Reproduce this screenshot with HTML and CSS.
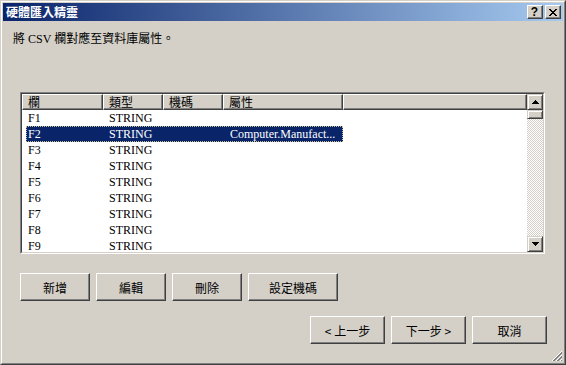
FILE: index.html
```html
<!DOCTYPE html>
<html lang="zh-Hant">
<head>
  <meta charset="UTF-8">
  <title>硬體匯入精靈</title>
  <link rel="stylesheet" href="styles.css">
</head>
<body>
  <div class="window">
    <div class="frame">
      <div class="titlebar">
        <span class="title">硬體匯入精靈</span>
        <div class="caption-buttons">
          <div class="cap-btn help">?</div>
          <div class="cap-btn">
            <svg width="8" height="7" viewBox="0 0 8 7"><path d="M0 0h2v1h-2zM6 0h2v1h-2zM1 1h2v1h-2zM5 1h2v1h-2zM2 2h4v1h-4zM3 3h2v1h-2zM2 4h4v1h-4zM1 5h2v1h-2zM5 5h2v1h-2zM0 6h2v1h-2zM6 6h2v1h-2z" fill="#000"/></svg>
          </div>
        </div>
      </div>

      <div class="content">
        <p class="intro">將 CSV 欄對應至資料庫屬性。</p>

        <!-- 欄位對應清單 -->
        <div class="listview">
          <div class="list-main">
            <div class="header">
              <div class="hcell c1">欄</div>
              <div class="hcell c2">類型</div>
              <div class="hcell c3">機碼</div>
              <div class="hcell c4">屬性</div>
              <div class="hcell filler"></div>
            </div>
            <div class="rows">
              <div class="row"><span class="c1">F1</span><span class="c2">STRING</span><span class="c3"></span><span class="c4"></span></div>
              <div class="row selected"><span class="c1">F2</span><span class="c2">STRING</span><span class="c3"></span><span class="c4">Computer.Manufact...</span></div>
              <div class="row"><span class="c1">F3</span><span class="c2">STRING</span><span class="c3"></span><span class="c4"></span></div>
              <div class="row"><span class="c1">F4</span><span class="c2">STRING</span><span class="c3"></span><span class="c4"></span></div>
              <div class="row"><span class="c1">F5</span><span class="c2">STRING</span><span class="c3"></span><span class="c4"></span></div>
              <div class="row"><span class="c1">F6</span><span class="c2">STRING</span><span class="c3"></span><span class="c4"></span></div>
              <div class="row"><span class="c1">F7</span><span class="c2">STRING</span><span class="c3"></span><span class="c4"></span></div>
              <div class="row"><span class="c1">F8</span><span class="c2">STRING</span><span class="c3"></span><span class="c4"></span></div>
              <div class="row"><span class="c1">F9</span><span class="c2">STRING</span><span class="c3"></span><span class="c4"></span></div>
            </div>
          </div>
          <div class="scrollbar">
            <div class="sb-btn">
              <svg width="7" height="4" viewBox="0 0 7 4"><path d="M3 0h1v1h1v1h1v1h1v1h-7v-1h1v-1h1v-1h1z" fill="#000"/></svg>
            </div>
            <div class="sb-thumb"></div>
            <div class="sb-track"></div>
            <div class="sb-btn">
              <svg width="7" height="4" viewBox="0 0 7 4"><path d="M0 0h7v1h-1v1h-1v1h-1v1h-1v-1h-1v-1h-1v-1h-1z" fill="#000"/></svg>
            </div>
          </div>
        </div>

        <div class="action-row">
          <button class="btn">新增</button>
          <button class="btn">編輯</button>
          <button class="btn">刪除</button>
          <button class="btn wide">設定機碼</button>
        </div>

        <div class="nav-row">
          <button class="btn nav">&lt; 上一步</button>
          <button class="btn nav">下一步 &gt;</button>
          <button class="btn nav">取消</button>
        </div>
      </div>

      <!-- 크기 조절 손잡이 -->
      <svg class="grip" width="12" height="12" viewBox="0 0 12 12">
        <path d="M11 1L1 11M11 5L5 11M11 9L9 11" stroke="#fff" stroke-width="1"/>
        <path d="M11 2L2 11M11 3L3 11M11 6L6 11M11 7L7 11M11 10L10 11" stroke="#808080" stroke-width="1"/>
      </svg>
    </div>
  </div>
</body>
</html>
```

FILE: styles.css
```css
body {
  margin: 0;
  background: #d4d0c8;
  font-family: "Liberation Serif", "Noto Sans CJK TC", serif;
  font-size: 12px;
  color: #000;
}

.window {
  box-sizing: border-box;
  width: 566px;
  height: 365px;
  border: 1px solid;
  border-color: #d4d0c8 #404040 #404040 #d4d0c8;
}

.frame {
  position: relative;
  box-sizing: border-box;
  height: 100%;
  border: 1px solid;
  border-color: #fff #808080 #808080 #fff;
  padding: 1px;
}

.titlebar {
  height: 18px;
  display: flex;
  align-items: center;
  justify-content: space-between;
  background: linear-gradient(to right, #0a246a, #a6caf0);
}

.title {
  padding-left: 3px;
  color: #fff;
  font-family: "Noto Sans CJK TC", sans-serif;
  font-weight: bold;
  font-size: 12px;
  line-height: 18px;
}

.caption-buttons {
  display: flex;
  gap: 2px;
  padding-right: 2px;
}

.cap-btn {
  box-sizing: border-box;
  width: 16px;
  height: 14px;
  background: #d4d0c8;
  border: 1px solid;
  border-color: #fff #404040 #404040 #fff;
  box-shadow: inset -1px -1px #808080;
  display: flex;
  justify-content: center;
  align-items: center;
}

.help {
  font-family: "Liberation Sans", sans-serif;
  font-weight: bold;
  font-size: 12px;
  line-height: 12px;
  padding-right: 1px;
}

.content {
  display: flex;
  flex-direction: column;
}

.intro {
  margin: 10px 0 0 10px;
  line-height: 16px;
  height: 16px;
}

.listview {
  box-sizing: border-box;
  margin: 45px 0 0 17px;
  width: 525px;
  height: 162px;
  border: 1px solid;
  border-color: #808080 #fff #fff #808080;
  display: flex;
}

.list-main {
  flex: 1;
  overflow: hidden;
  background: #fff;
  border: 1px solid;
  border-right: 0;
  border-color: #404040 #d4d0c8 #d4d0c8 #404040;
}

.scrollbar {
  width: 16px;
  display: flex;
  flex-direction: column;
  border: 1px solid;
  border-left: 0;
  border-color: #404040 #d4d0c8 #d4d0c8 #404040;
}

.sb-btn,
.sb-thumb {
  box-sizing: border-box;
  background: #d4d0c8;
  border: 1px solid;
  border-color: #d4d0c8 #404040 #404040 #d4d0c8;
  box-shadow: inset 1px 1px #fff, inset -1px -1px #808080;
}

.sb-btn {
  height: 16px;
  display: flex;
  justify-content: center;
  align-items: center;
}

.sb-thumb {
  height: 9px;
}

.sb-track {
  flex: 1;
  background: conic-gradient(#fff 25%, #d4d0c8 0 50%, #fff 0 75%, #d4d0c8 0);
  background-size: 2px 2px;
}

.header {
  display: flex;
  height: 16px;
}

.hcell {
  box-sizing: border-box;
  height: 16px;
  background: #d4d0c8;
  border: 1px solid;
  border-color: #fff #404040 #404040 #fff;
  box-shadow: inset -1px -1px #808080;
  padding-left: 5px;
  font-family: "Noto Sans CJK TC", sans-serif;
  line-height: 13px;
  white-space: nowrap;
}

.header .c1 { width: 81px; }
.header .c2 { width: 60px; }
.header .c3 { width: 60px; }
.header .c4 { width: 120px; }
.header .filler { flex: 1; }

.row {
  display: grid;
  grid-template-columns: 77px 60px 60px 120px;
  width: 317px;
  height: 16px;
  margin-left: 4px;
  line-height: 16px;
  white-space: nowrap;
}

.row span {
  padding-left: 6px;
  overflow: hidden;
}

.row .c1 {
  padding-left: 2px;
}

.row .c4 {
  padding-left: 7px;
}

.selected {
  background: #0a246a;
  color: #fff;
  outline: 1px dotted #c8c090;
  outline-offset: -1px;
}

.action-row {
  display: flex;
  gap: 6px;
  margin: 19px 0 0 17px;
}

.nav-row {
  display: flex;
  gap: 6px;
  justify-content: flex-end;
  margin: 15px 16px 0 0;
}

.btn {
  box-sizing: border-box;
  width: 70px;
  height: 28px;
  margin: 0;
  padding: 0;
  background: #d4d0c8;
  border: 1px solid;
  border-color: #fff #404040 #404040 #fff;
  box-shadow: inset -1px -1px #808080;
  font-family: "Noto Sans CJK TC", sans-serif;
  font-size: 12px;
  color: #000;
}

.wide {
  width: 90px;
}

.nav {
  width: 75px;
}

.grip {
  position: absolute;
  right: 1px;
  bottom: 1px;
}
```
